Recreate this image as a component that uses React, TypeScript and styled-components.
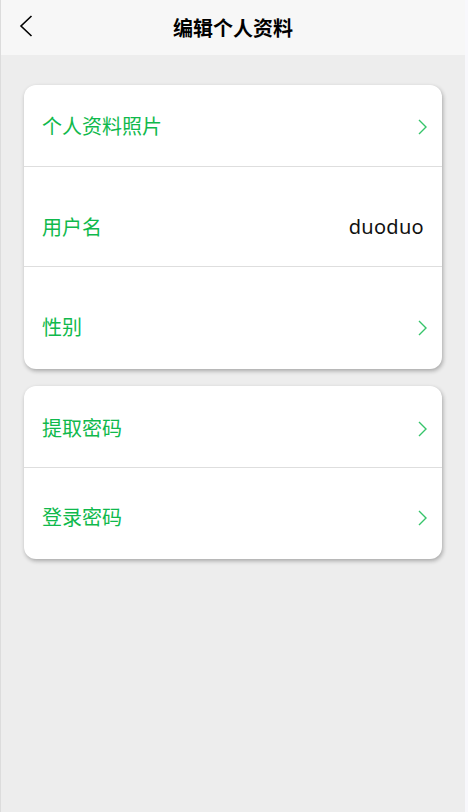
import React from 'react';
import styled, { createGlobalStyle } from 'styled-components';

const GlobalStyle = createGlobalStyle`
  html, body {
    margin: 0;
    padding: 0;
    background: #f8f8fc;
  }
  * {
    box-sizing: border-box;
  }
`;

const Page = styled.div`
  width: 465px;
  min-height: 812px;
  border-left: 1px solid #dcdcdc;
  background: #ededed;
  font-family: "Noto Sans", "Noto Sans CJK SC", sans-serif;
  display: flex;
  flex-direction: column;
`;

const Header = styled.header`
  height: 55px;
  background: #f7f7f7;
  display: grid;
  grid-template-columns: 60px 1fr 60px;
  align-items: center;
`;

const BackButton = styled.button`
  border: none;
  background: none;
  padding: 0 0 0 18px;
  height: 55px;
  display: flex;
  align-items: center;
  cursor: pointer;
  margin-top: -3px;
`;

const Title = styled.h1`
  margin: 0;
  font-size: 20px;
  font-weight: 700;
  color: #000;
  text-align: center;
  font-family: "Noto Sans CJK SC", sans-serif;
`;

const Content = styled.main`
  flex: 1;
  padding: 30px 23px;
  display: flex;
  flex-direction: column;
  gap: 17px;
`;

const Card = styled.section`
  background: #fff;
  border-radius: 12px;
  box-shadow: 1px 2px 4px rgba(0, 0, 0, 0.3);
  overflow: hidden;
`;

const Row = styled.div<{ $height: number; $padTop?: number; $padBottom?: number; $divider?: boolean }>`
  height: ${(p) => p.$height}px;
  padding: ${(p) => p.$padTop || 0}px 18px ${(p) => p.$padBottom || 0}px 18px;
  border-top: ${(p) => (p.$divider ? '1px solid #dedede' : 'none')};
  display: flex;
  align-items: center;
  justify-content: space-between;
  cursor: pointer;
`;

const Label = styled.span`
  font-size: 20px;
  font-weight: 400;
  color: #10b94c;
  font-family: "Noto Sans CJK SC", sans-serif;
`;

const Value = styled.span`
  font-size: 20px;
  color: #111;
  font-family: "Noto Sans", sans-serif;
  letter-spacing: 0.3px;
`;

const Arrow = styled.svg`
  margin-right: -3px;
  margin-top: 3px;
`;

const Chevron = () => (
  <Arrow width="9" height="16" viewBox="0 0 9 16" fill="none">
    <path d="M1 1 L8 8 L1 15" stroke="#36c46a" strokeWidth="1.4" />
  </Arrow>
);

interface Item {
  label: string;
  value?: string;
  height: number;
  padTop?: number;
  padBottom?: number;
}

const groups: Item[][] = [
  [
    { label: '个人资料照片', height: 81 },
    { label: '用户名', value: 'duoduo', height: 100, padTop: 20 },
    { label: '性别', height: 103, padTop: 20, padBottom: 3 },
  ],
  [
    { label: '提取密码', height: 81, padTop: 2 },
    { label: '登录密码', height: 92, padTop: 6 },
  ],
];

const App = () => {
  return (
    <>
      <GlobalStyle />
      <Page>
        <Header>
          <BackButton aria-label="返回">
            <svg width="14" height="22" viewBox="0 0 14 22" fill="none">
              <path d="M12.5 1 L2 11 L12.5 21" stroke="#000" strokeWidth="1.6" />
            </svg>
          </BackButton>
          <Title>编辑个人资料</Title>
          <span />
        </Header>
        <Content>
          {groups.map((items, gi) => (
            <Card key={gi}>
              {items.map((item, i) => (
                <Row
                  key={item.label}
                  $height={item.height}
                  $padTop={item.padTop}
                  $padBottom={item.padBottom}
                  $divider={i > 0}
                >
                  <Label>{item.label}</Label>
                  {item.value ? <Value>{item.value}</Value> : <Chevron />}
                </Row>
              ))}
            </Card>
          ))}
        </Content>
      </Page>
    </>
  );
};

export default App;
